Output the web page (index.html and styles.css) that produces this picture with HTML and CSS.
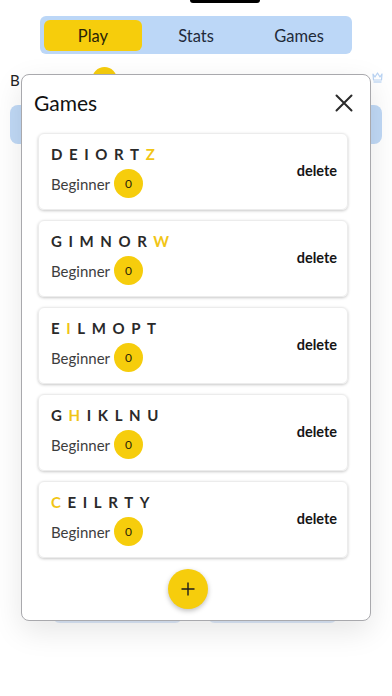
FILE: index.html
```html
<!DOCTYPE html>
<html lang="en">
<head>
<meta charset="utf-8">
<title>Games</title>
<link rel="stylesheet" href="styles.css">
</head>
<body>
<div class="page">
  <div class="notch-row"><div class="notch"></div></div>
  <nav class="tabs">
    <div class="tab active">Play</div>
    <div class="tab">Stats</div>
    <div class="tab">Games</div>
  </nav>
  <div class="info-row">
    <span class="info-b">B</span>
    <span class="info-dot"></span>
    <span class="info-spacer"></span>
    <svg class="crown" width="11" height="12" viewBox="0 0 11 12"><path d="M1 3 L3 6 L5.5 2 L8 6 L10 3 L9.5 9 L1.5 9 Z" fill="none" stroke="#b9d3f3" stroke-width="1.2" stroke-linejoin="round"/><path d="M1.5 11 H9.5" stroke="#b9d3f3" stroke-width="1.2"/></svg>
  </div>
  <div class="blue-bar"></div>
  <div class="bottom-buttons">
    <div class="bbtn"></div>
    <div class="bbtn"></div>
  </div>
</div>

<div class="modal">
  <div class="modal-head">
    <h1 class="modal-title">Games</h1>
    <svg class="close" width="18" height="18" viewBox="0 0 18 18"><path d="M1.5 1.5 L16.5 16.5 M16.5 1.5 L1.5 16.5" stroke="#2b2b2b" stroke-width="2" stroke-linecap="round"/></svg>
  </div>
  <div class="cards">
    <div class="card">
      <div class="card-main">
        <div class="letters"><span>D</span><span>E</span><span>I</span><span>O</span><span>R</span><span>T</span><span class="hl">Z</span></div>
        <div class="level"><span>Beginner</span><span class="badge">0</span></div>
      </div>
      <div class="delete">delete</div>
    </div>
    <div class="card">
      <div class="card-main">
        <div class="letters"><span>G</span><span>I</span><span>M</span><span>N</span><span>O</span><span>R</span><span class="hl">W</span></div>
        <div class="level"><span>Beginner</span><span class="badge">0</span></div>
      </div>
      <div class="delete">delete</div>
    </div>
    <div class="card">
      <div class="card-main">
        <div class="letters"><span>E</span><span class="hl">I</span><span>L</span><span>M</span><span>O</span><span>P</span><span>T</span></div>
        <div class="level"><span>Beginner</span><span class="badge">0</span></div>
      </div>
      <div class="delete">delete</div>
    </div>
    <div class="card">
      <div class="card-main">
        <div class="letters"><span>G</span><span class="hl">H</span><span>I</span><span>K</span><span>L</span><span>N</span><span>U</span></div>
        <div class="level"><span>Beginner</span><span class="badge">0</span></div>
      </div>
      <div class="delete">delete</div>
    </div>
    <div class="card">
      <div class="card-main">
        <div class="letters"><span class="hl">C</span><span>E</span><span>I</span><span>L</span><span>R</span><span>T</span><span>Y</span></div>
        <div class="level"><span>Beginner</span><span class="badge">0</span></div>
      </div>
      <div class="delete">delete</div>
    </div>
  </div>
  <div class="add-row">
    <div class="add-btn"><svg width="14" height="14" viewBox="0 0 14 14"><path d="M7 0.5 V13.5 M0.5 7 H13.5" stroke="#1c1c1c" stroke-width="1.4"/></svg></div>
  </div>
</div>
</body>
</html>
```

FILE: styles.css
```css
* { box-sizing: border-box; }
html, body { margin: 0; padding: 0; background: #ffffff; }
body {
  font-family: Lato, "Open Sans", "Noto Sans", sans-serif;
  color: #222;
  width: 392px;
  height: 696px;
  position: relative;
  overflow: hidden;
}
.page { display: flex; flex-direction: column; }
.notch-row { display: flex; padding-left: 190px; height: 3px; }
.notch { width: 70px; height: 3px; background: #000; border-radius: 0 0 4px 4px; }
.tabs {
  margin: 13px 40px 0;
  height: 38px;
  background: #bcd7f7;
  border-radius: 6px;
  padding: 4px;
  display: flex;
  gap: 5px;
}
.tab {
  flex: 1;
  display: flex;
  align-items: center;
  justify-content: center;
  font-size: 16.5px;
  color: #1f2a3a;
  border-radius: 6px;
  height: 31px;
}
.tab.active { background: #f6cd0c; color: #2a2408; }
.info-row {
  margin-top: 13px;
  height: 25px;
  display: flex;
  align-items: center;
  padding: 0 9px 0 10px;
}
.info-b { font-size: 15px; color: #222; }
.info-dot { width: 25px; height: 25px; border-radius: 50%; background: #f6cd0c; margin-left: 72px; }
.info-spacer { flex: 1; }
.crown { margin-top: -6px; }
.blue-bar {
  margin: 13px 10px 0;
  height: 39px;
  background: #c0d9f6;
  border-radius: 8px;
}
.bottom-buttons {
  margin-top: 440px;
  display: flex;
  gap: 24px;
  padding-left: 52px;
}
.bbtn { width: 131px; height: 39px; background: #dbe7f8; border-radius: 8px; }

.modal {
  position: absolute;
  left: 21px;
  top: 74px;
  width: 350px;
  height: 547px;
  background: #fff;
  border: 1px solid #a9a9ad;
  border-radius: 8px;
  box-shadow: 0 10px 30px rgba(0,0,0,0.10);
  display: flex;
  flex-direction: column;
}
.modal-head {
  display: flex;
  align-items: center;
  justify-content: space-between;
  padding: 14px 17px 0 12px;
}
.modal-title {
  margin: 0;
  font-size: 21px;
  line-height: 28px;
  font-weight: 400;
  color: #111;
}
.cards {
  margin-top: 16px;
  padding: 0 22px 0 16px;
  display: flex;
  flex-direction: column;
  gap: 10px;
}
.card {
  height: 77px;
  border: 1px solid #ececec;
  border-radius: 6px;
  box-shadow: 0 1px 3px rgba(0,0,0,0.22);
  display: flex;
  align-items: center;
  justify-content: space-between;
  padding: 10px 10px 11px 12px;
}
.card-main { display: flex; flex-direction: column; gap: 5px; align-self: stretch; }
.letters {
  height: 20px;
  line-height: 20px;
  font-size: 15px;
  font-weight: 700;
  letter-spacing: 6.6px;
  color: #2a2a2a;
}
.letters .hl { color: #f1c516; }
.level { display: flex; align-items: center; gap: 4px; font-size: 15px; color: #3d3d3d; }
.badge {
  width: 29px;
  height: 29px;
  border-radius: 50%;
  background: #f6cd0c;
  display: flex;
  align-items: center;
  justify-content: center;
  font-size: 12px;
  color: #2a2408;
}
.delete { font-size: 14.5px; font-weight: 700; color: #151515; margin-top: -2px; }
.add-row { margin-top: 11px; display: flex; padding-left: 146px; }
.add-btn {
  width: 40px;
  height: 40px;
  border-radius: 50%;
  background: #f6cd0c;
  box-shadow: 0 2px 5px rgba(0,0,0,0.25);
  display: flex;
  align-items: center;
  justify-content: center;
}
```
